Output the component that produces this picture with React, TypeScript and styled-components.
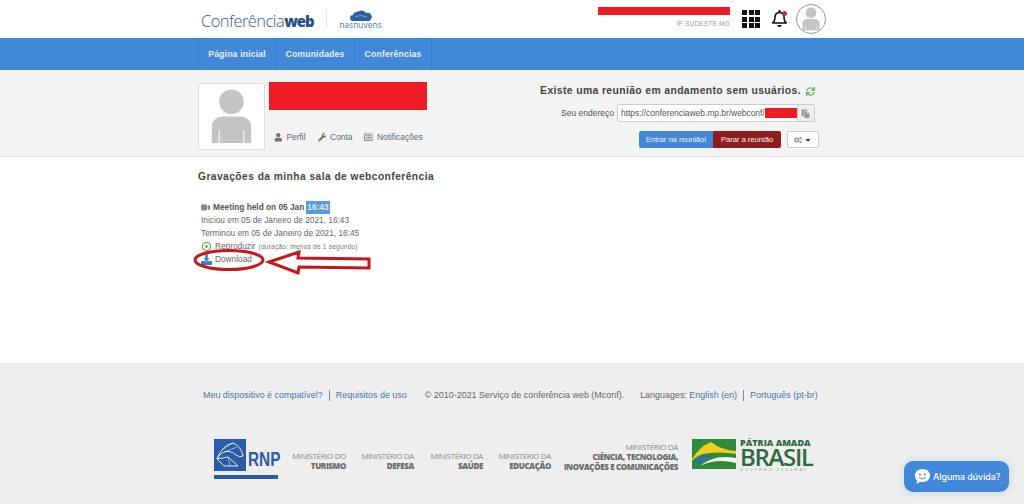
import styled, { createGlobalStyle } from 'styled-components';
import { FaCogs, FaWrench, FaUser, FaPaste, FaSync, FaRegListAlt, FaVideo, FaCaretDown, FaRegBell } from 'react-icons/fa';
import { RiPlayCircleLine } from 'react-icons/ri';

const GlobalStyle = createGlobalStyle`
  html, body { margin: 0; padding: 0; background: #fff; }
  body { font-family: "Liberation Sans", Arial, sans-serif; color: #444; width: 1024px; height: 504px; overflow: hidden; }
`;

const Page = styled.div`
  position: relative;
  width: 1024px;
  height: 504px;
  overflow: hidden;
  display: flex;
  flex-direction: column;
`;

const Wrap = styled.div`
  width: 628px;
  margin: 0 auto;
  display: flex;
  align-items: flex-start;
  justify-content: space-between;
`;

const Header = styled.header`
  height: 38px;
  flex-shrink: 0;
`;

const BrandRow = styled.div`
  display: flex;
  align-items: center;
  height: 38px;
  padding-left: 3px;
`;

const Brand = styled.div`
  font-family: "Open Sans", sans-serif;
  font-size: 16.5px;
  font-weight: 300;
  letter-spacing: -0.55px;
  color: #3b5a7e;
  width: 111px;
  margin-top: 2px;
  white-space: nowrap;
  b { font-size: 15px; font-weight: 800; color: #2a4f86; letter-spacing: -1px; }
`;

const BrandDivider = styled.div`
  width: 1px;
  height: 20px;
  background: #e6e6e6;
  margin: 0 12px 0 14px;
`;

const Partner = styled.div`
  display: flex;
  flex-direction: column;
  align-items: center;
  width: 43px;
  margin-top: -2px;
  font-family: "Open Sans", sans-serif;
  font-size: 8.5px;
  line-height: 7px;
  color: #4a78ae;
`;

const UserArea = styled.div`
  display: flex;
  align-items: center;
  height: 38px;
`;

const UserInfo = styled.div`
  width: 132px;
  display: flex;
  flex-direction: column;
  align-items: flex-end;
  gap: 5px;
  margin-top: -4px;
  margin-right: 12px;
`;

const RedBar = styled.div<{ $w: number; $h: number }>`
  width: ${p => p.$w}px;
  height: ${p => p.$h}px;
  background: #ed1c24;
  flex-shrink: 0;
`;

const Institution = styled.div`
  font-size: 6.5px;
  line-height: 8px;
  color: #999;
  letter-spacing: 0.2px;
`;

const AppsGrid = styled.div`
  display: grid;
  grid-template-columns: repeat(3, 5px);
  grid-auto-rows: 5px;
  gap: 1.5px;
  margin-right: 11px;
`;

const AppsDot = styled.span`
  background: #111;
`;

const BellWrap = styled.div`
  position: relative;
  width: 18px;
  height: 18px;
  margin-right: 7px;
  color: #111;
  font-size: 17px;
  line-height: 18px;
`;

const BellDot = styled.span`
  position: absolute;
  top: 1px;
  right: 2px;
  width: 5px;
  height: 5px;
  border-radius: 50%;
  background: #c8323a;
`;

const Avatar = styled.div`
  width: 28px;
  height: 28px;
  border-radius: 50%;
  border: 1px solid #999;
  background: #fff;
  overflow: hidden;
`;

const Nav = styled.nav`
  height: 32px;
  flex-shrink: 0;
  background: #4288d9;
`;

const NavList = styled.div`
  display: flex;
  height: 32px;
  border-left: 1px solid #3b7cc8;
`;

const NavItem = styled.a<{ $w: number }>`
  width: ${p => p.$w}px;
  box-sizing: border-box;
  display: flex;
  align-items: center;
  justify-content: center;
  border-right: 1px solid #3b7cc8;
  font-size: 8.7px;
  font-weight: 700;
  letter-spacing: 0.15px;
  color: #e6eff9;
`;

const Profile = styled.section`
  height: 87px;
  flex-shrink: 0;
  box-sizing: border-box;
  background: #f3f3f3;
  border-bottom: 1px solid #e2e2e2;
  padding-top: 12px;
`;

const ProfileLeft = styled.div`
  display: flex;
  gap: 4px;
`;

const PhotoBox = styled.div`
  width: 67px;
  height: 67px;
  box-sizing: border-box;
  background: #fff;
  border: 1px solid #ddd;
  border-radius: 2px;
  margin-top: 1px;
`;

const ProfileInfo = styled.div`
  display: flex;
  flex-direction: column;
  gap: 22px;
`;

const ProfileLinks = styled.div`
  display: flex;
  padding-left: 5px;
  gap: 12px;
`;

const ProfileLink = styled.a`
  display: flex;
  align-items: center;
  gap: 4px;
  font-size: 8.4px;
  line-height: 11px;
  color: #5a6a7a;
  svg { color: #777; font-size: 8.5px; }
`;

const ProfileRight = styled.div`
  width: 280px;
  margin-right: 7px;
  display: flex;
  flex-direction: column;
  align-items: flex-end;
`;

const Status = styled.div`
  display: flex;
  align-items: center;
  gap: 5px;
  margin: 2px 4px 0 0;
  font-size: 10.4px;
  line-height: 14px;
  font-weight: 700;
  letter-spacing: 0.37px;
  color: #444;
  white-space: nowrap;
  svg { color: #5cb85c; font-size: 9px; }
`;

const AddressRow = styled.div`
  display: flex;
  align-items: center;
  gap: 3px;
  margin: 6px 4px 0 0;
`;

const AddressLabel = styled.span`
  font-size: 8.5px;
  color: #555;
`;

const AddressGroup = styled.div`
  width: 198px;
  height: 18px;
  box-sizing: border-box;
  display: flex;
  align-items: center;
  background: #fff;
  border: 1px solid #ccc;
  border-radius: 2px;
  overflow: hidden;
`;

const AddressText = styled.span`
  flex: 1;
  display: flex;
  align-items: center;
  padding-left: 3px;
  font-size: 8.5px;
  letter-spacing: -0.05px;
  color: #555;
  white-space: nowrap;
`;

const CopyButton = styled.span`
  width: 18px;
  height: 18px;
  display: flex;
  align-items: center;
  justify-content: center;
  background: #eee;
  border-left: 1px solid #ccc;
  color: #999;
  font-size: 9px;
`;

const ActionRow = styled.div`
  display: flex;
  gap: 6px;
  margin-top: 9px;
`;

const ActionGroup = styled.div`
  display: flex;
  height: 17px;
  border-radius: 2px;
  overflow: hidden;
`;

const ActionButton = styled.button<{ $bg: string; $w: number }>`
  width: ${p => p.$w}px;
  padding: 0;
  border: 0;
  background: ${p => p.$bg};
  color: #eee;
  font-family: inherit;
  font-size: 7.8px;
  letter-spacing: -0.1px;
`;

const GearButton = styled.button`
  width: 32px;
  height: 17px;
  padding: 0;
  border: 1px solid #ccc;
  border-radius: 2px;
  background: #fff;
  color: #999;
  font-size: 8px;
  display: flex;
  align-items: center;
  justify-content: center;
  gap: 2px;
  svg:last-child { color: #333; font-size: 8px; }
`;

const Main = styled.main`
  height: 206px;
  flex-shrink: 0;
`;

const MainInner = styled.div`
  width: 628px;
  margin: 0 auto;
  padding-top: 13px;
`;

const Heading = styled.h2`
  margin: 0;
  font-size: 10.2px;
  line-height: 14px;
  font-weight: 700;
  letter-spacing: 0.47px;
  color: #444;
`;

const Recording = styled.div`
  margin: 17px 0 0 3px;
  display: flex;
  flex-direction: column;
  font-size: 8.3px;
  line-height: 13px;
  color: #666;
`;

const RecordingTitle = styled.div`
  display: flex;
  align-items: center;
  gap: 3px;
  font-weight: 700;
  color: #555;
  svg { color: #888; font-size: 9px; }
`;

const Selected = styled.span`
  background: #5a9ae0;
  color: #dfeaf6;
  padding: 0 1px;
  margin-left: -1px;
`;

const RecordLink = styled.div`
  display: flex;
  align-items: center;
  gap: 3px;
  color: #666;
  svg { flex-shrink: 0; }
  small { font-size: 6.7px; letter-spacing: 0.15px; margin-left: 0; color: #777; }
`;

const Annotation = styled.svg`
  position: absolute;
  left: 190px;
  top: 245px;
`;

const Footer = styled.footer`
  flex: 1;
  background: #eee;
  display: flex;
  flex-direction: column;
  align-items: center;
  padding-top: 26px;
`;

const FooterLine = styled.div`
  width: 618px;
  display: flex;
  align-items: center;
  font-size: 8.95px;
  line-height: 12px;
  color: #666;
  white-space: nowrap;
`;

const FooterLink = styled.a`
  color: #4678ad;
`;

const FooterGap = styled.span<{ $w: number }>`
  width: ${p => p.$w}px;
`;

const Pipe = styled.span`
  width: 1px;
  height: 11px;
  background: #888;
  margin: 0 6px;
`;

const Logos = styled.div`
  width: 596px;
  display: flex;
  align-items: flex-start;
  margin-top: 38px;
`;

const RnpLogo = styled.div`
  display: grid;
  grid-template-columns: 32px 30px;
  width: 64px;
  column-gap: 2px;
  margin-right: 13px;
`;

const RnpText = styled.span`
  font-family: "Liberation Sans", sans-serif;
  font-size: 20px;
  line-height: 20px;
  font-weight: 700;
  color: #2b5ca8;
  white-space: nowrap;
  align-self: end;
  margin-bottom: 2px;
  transform: scaleX(0.77);
  transform-origin: left center;
`;

const RnpStrip = styled.span`
  grid-column: 1 / 3;
  height: 4px;
  margin-top: 4px;
  background: #2b5ca8;
`;

const Ministry = styled.div<{ $w: number; $top?: number }>`
  width: ${p => p.$w}px;
  margin-top: ${p => p.$top ?? 12}px;
  text-align: right;
  font-family: "Open Sans", sans-serif;
  font-size: 8px;
  line-height: 10px;
  letter-spacing: -0.36px;
  color: #8a8a8a;
  white-space: nowrap;
  flex-shrink: 0;
  b { display: block; font-weight: 800; color: #6a6a6a; }
`;

const BrasilLogo = styled.div`
  display: flex;
  gap: 4px;
  margin: 0 0 0 14px;
`;

const BrasilText = styled.div`
  display: flex;
  flex-direction: column;
  margin-top: -1.5px;
  color: #2d6a3e;
  font-family: "Open Sans", sans-serif;
`;

const BrasilTop = styled.span`
  font-size: 9px;
  line-height: 9px;
  font-weight: 800;
  letter-spacing: 0;
  white-space: nowrap;
`;

const BrasilMain = styled.span`
  font-size: 24px;
  line-height: 20px;
  font-weight: 600;
  letter-spacing: -1.3px;
`;

const BrasilSub = styled.span`
  font-size: 4px;
  line-height: 6px;
  letter-spacing: 2.1px;
  color: #999;
  white-space: nowrap;
`;

const HelpButton = styled.div`
  position: absolute;
  left: 904px;
  top: 461px;
  width: 105px;
  height: 31px;
  display: flex;
  align-items: center;
  gap: 2px;
  padding-left: 10px;
  box-sizing: border-box;
  border-radius: 9px;
  background: #4288d9;
  box-shadow: 0 0 8px rgba(66, 136, 217, 0.25);
  color: #fff;
  font-family: "Inter", sans-serif;
  font-size: 8.8px;
  font-weight: 500;
`;

const Silhouette = ({ size }: { size: number }) => (
  <svg width={size} height={size} viewBox="0 0 66 66">
    <circle cx="33" cy="18" r="12.500" fill="#c4c4c4" />
    <path d="M13 60V44c0-8 6-11 12-11h16c6 0 12 3 12 11v16z" fill="#c4c4c4" />
    <path d="M20.500 47v13M45.500 47v13" stroke="#fff" strokeWidth="1" />
  </svg>
);

const CloudMark = () => (
  <svg width="22" height="12" viewBox="0 0 22 12">
    <path d="M3 12a3 3 0 0 1 0-6 4 4 0 0 1 4-3 6 6 0 0 1 9 1 4 4 0 0 1 3 8z" fill="#2f5f9e" />
    <path d="M5 8q5-3 12 0" stroke="#9cc0e6" strokeWidth=".7" fill="none" />
  </svg>
);

const RnpMark = () => (
  <svg width="32" height="32" viewBox="0 0 32 32">
    <rect width="32" height="32" fill="#2b5ca8" />
    <path d="M3 20Q8 6 19 4q8 3 10 13-3 2-7-1-5-5-12-3-5 2-7 7zM3 20l7 7h14l-10-9z" fill="none" stroke="#dfe8f5" strokeWidth="1" />
    <path d="M8 11l11-7M10 13l13-5M14 18l2 9" stroke="#dfe8f5" strokeWidth=".6" />
  </svg>
);

const BrasilFlag = () => (
  <svg width="44" height="30" viewBox="0 0 44 30">
    <rect width="44" height="30" fill="#2f8a3c" />
    <path d="M0 20Q8 7 19 3q10 8 25 9v3Q24 12 11 15 4 17 0 22z" fill="#f2cf1f" />
    <path d="M3 23q6-9 18-7-8 4-13 10z" fill="#2e6fa8" />
    <path d="M8 27q14-12 36-8v5Q24 19 8 27z" fill="#f8f8ea" />
  </svg>
);

export default function App() {
  return (
    <Page>
      <GlobalStyle />
      <Header>
        <Wrap>
          <BrandRow>
            <Brand>Conferência<b>web</b></Brand>
            <BrandDivider />
            <Partner>
              <CloudMark />
              nasnuvens
            </Partner>
          </BrandRow>
          <UserArea>
            <UserInfo>
              <RedBar $w={132} $h={8} />
              <Institution>IF SUDESTE MG</Institution>
            </UserInfo>
            <AppsGrid>
              {Array.from({ length: 9 }).map((_, i) => <AppsDot key={i} />)}
            </AppsGrid>
            <BellWrap>
              <FaRegBell />
              <BellDot />
            </BellWrap>
            <Avatar><Silhouette size={28} /></Avatar>
          </UserArea>
        </Wrap>
      </Header>

      <Nav>
        <Wrap>
          <NavList>
            <NavItem $w={77}>Página inicial</NavItem>
            <NavItem $w={79}>Comunidades</NavItem>
            <NavItem $w={77}>Conferências</NavItem>
          </NavList>
        </Wrap>
      </Nav>

      <Profile>
        <Wrap>
          <ProfileLeft>
            <PhotoBox><Silhouette size={65} /></PhotoBox>
            <ProfileInfo>
              <RedBar $w={158} $h={28} />
              <ProfileLinks>
                <ProfileLink><FaUser />Perfil</ProfileLink>
                <ProfileLink><FaWrench />Conta</ProfileLink>
                <ProfileLink><FaRegListAlt />Notificações</ProfileLink>
              </ProfileLinks>
            </ProfileInfo>
          </ProfileLeft>
          <ProfileRight>
            <Status>Existe uma reunião em andamento sem usuários. <FaSync /></Status>
            <AddressRow>
              <AddressLabel>Seu endereço</AddressLabel>
              <AddressGroup>
                <AddressText>https://conferenciaweb.mp.br/webconf/<RedBar $w={32} $h={10} /></AddressText>
                <CopyButton><FaPaste /></CopyButton>
              </AddressGroup>
            </AddressRow>
            <ActionRow>
              <ActionGroup>
                <ActionButton $bg="#4288d9" $w={74}>Entrar na reunião!</ActionButton>
                <ActionButton $bg="#8f1d1d" $w={68}>Parar a reunião</ActionButton>
              </ActionGroup>
              <GearButton><FaCogs /><FaCaretDown /></GearButton>
            </ActionRow>
          </ProfileRight>
        </Wrap>
      </Profile>

      <Main>
        <MainInner>
          <Heading>Gravações da minha sala de webconferência</Heading>
          <Recording>
            <RecordingTitle><FaVideo />Meeting held on 05 Jan <Selected>16:43</Selected></RecordingTitle>
            <div>Iniciou em 05 de Janeiro de 2021, 16:43</div>
            <div>Terminou em 05 de Janeiro de 2021, 16:45</div>
            <RecordLink>
              <RiPlayCircleLine size={11} color="#4f9a2c" />
              Reproduzir <small>(duração: menos de 1 segundo)</small>
            </RecordLink>
            <RecordLink>
              <svg width="11" height="11" viewBox="0 0 11 11">
                <path d="M0 7h11v4H0z" fill="#3f7fc4" />
                <path d="M4 0h3v4h2L5.500 8 2 4h2z" fill="#3f7fc4" stroke="#fff" strokeWidth=".4" />
              </svg>
              Download
            </RecordLink>
          </Recording>
        </MainInner>
      </Main>

      <Footer>
        <FooterLine>
          <FooterLink>Meu dispositivo é compatível?</FooterLink>
          <Pipe />
          <FooterLink>Requisitos de uso</FooterLink>
          <FooterGap $w={18} />
          © 2010-2021 Serviço de conferência web (Mconf).
          <FooterGap $w={16} />
          Languages:&nbsp;<FooterLink>English (en)</FooterLink>
          <Pipe />
          <FooterLink>Português (pt-br)</FooterLink>
        </FooterLine>
        <Logos>
          <RnpLogo>
            <RnpMark />
            <RnpText>RNP</RnpText>
            <RnpStrip />
          </RnpLogo>
          <Ministry $w={55}>MINISTÉRIO DO<b>TURISMO</b></Ministry>
          <Ministry $w={68}>MINISTÉRIO DA<b>DEFESA</b></Ministry>
          <Ministry $w={69}>MINISTÉRIO DA<b>SAÚDE</b></Ministry>
          <Ministry $w={68}>MINISTÉRIO DA<b>EDUCAÇÃO</b></Ministry>
          <Ministry $w={127} $top={3}>MINISTÉRIO DA<b>CIÊNCIA, TECNOLOGIA,</b><b>INOVAÇÕES E COMUNICAÇÕES</b></Ministry>
          <BrasilLogo>
            <BrasilFlag />
            <BrasilText>
              <BrasilTop>PÁTRIA AMADA</BrasilTop>
              <BrasilMain>BRASIL</BrasilMain>
              <BrasilSub>GOVERNO FEDERAL</BrasilSub>
            </BrasilText>
          </BrasilLogo>
        </Logos>
      </Footer>

      <Annotation width="190" height="32" viewBox="0 0 190 32">
        <ellipse cx="39" cy="15" rx="34" ry="9.500" fill="none" stroke="#c8161d" strokeWidth="3" />
        <path d="M79 17l30-10-1 6 71 1 0 9-70-1-1 6z" fill="none" stroke="#c8161d" strokeWidth="3" />
      </Annotation>

      <HelpButton>
        <svg width="17" height="17" viewBox="0 0 17 17">
          <path d="M8.500 1C12.900 1 16 3.800 16 7.500S12.900 14 8.500 14c-.8 0-1.500-.1-2.200-.3L2.500 16l.6-3.600C1.800 11.200 1 9.500 1 7.500 1 3.800 4.100 1 8.500 1z" fill="#fff" />
          <circle cx="6" cy="6.500" r="1" fill="#4288d9" />
          <circle cx="11" cy="6.500" r="1" fill="#4288d9" />
          <path d="M5 9.500q3.500 3 7 0" stroke="#4288d9" strokeWidth="1" fill="none" />
        </svg>
        Alguma dúvida?
      </HelpButton>
    </Page>
  );
}
